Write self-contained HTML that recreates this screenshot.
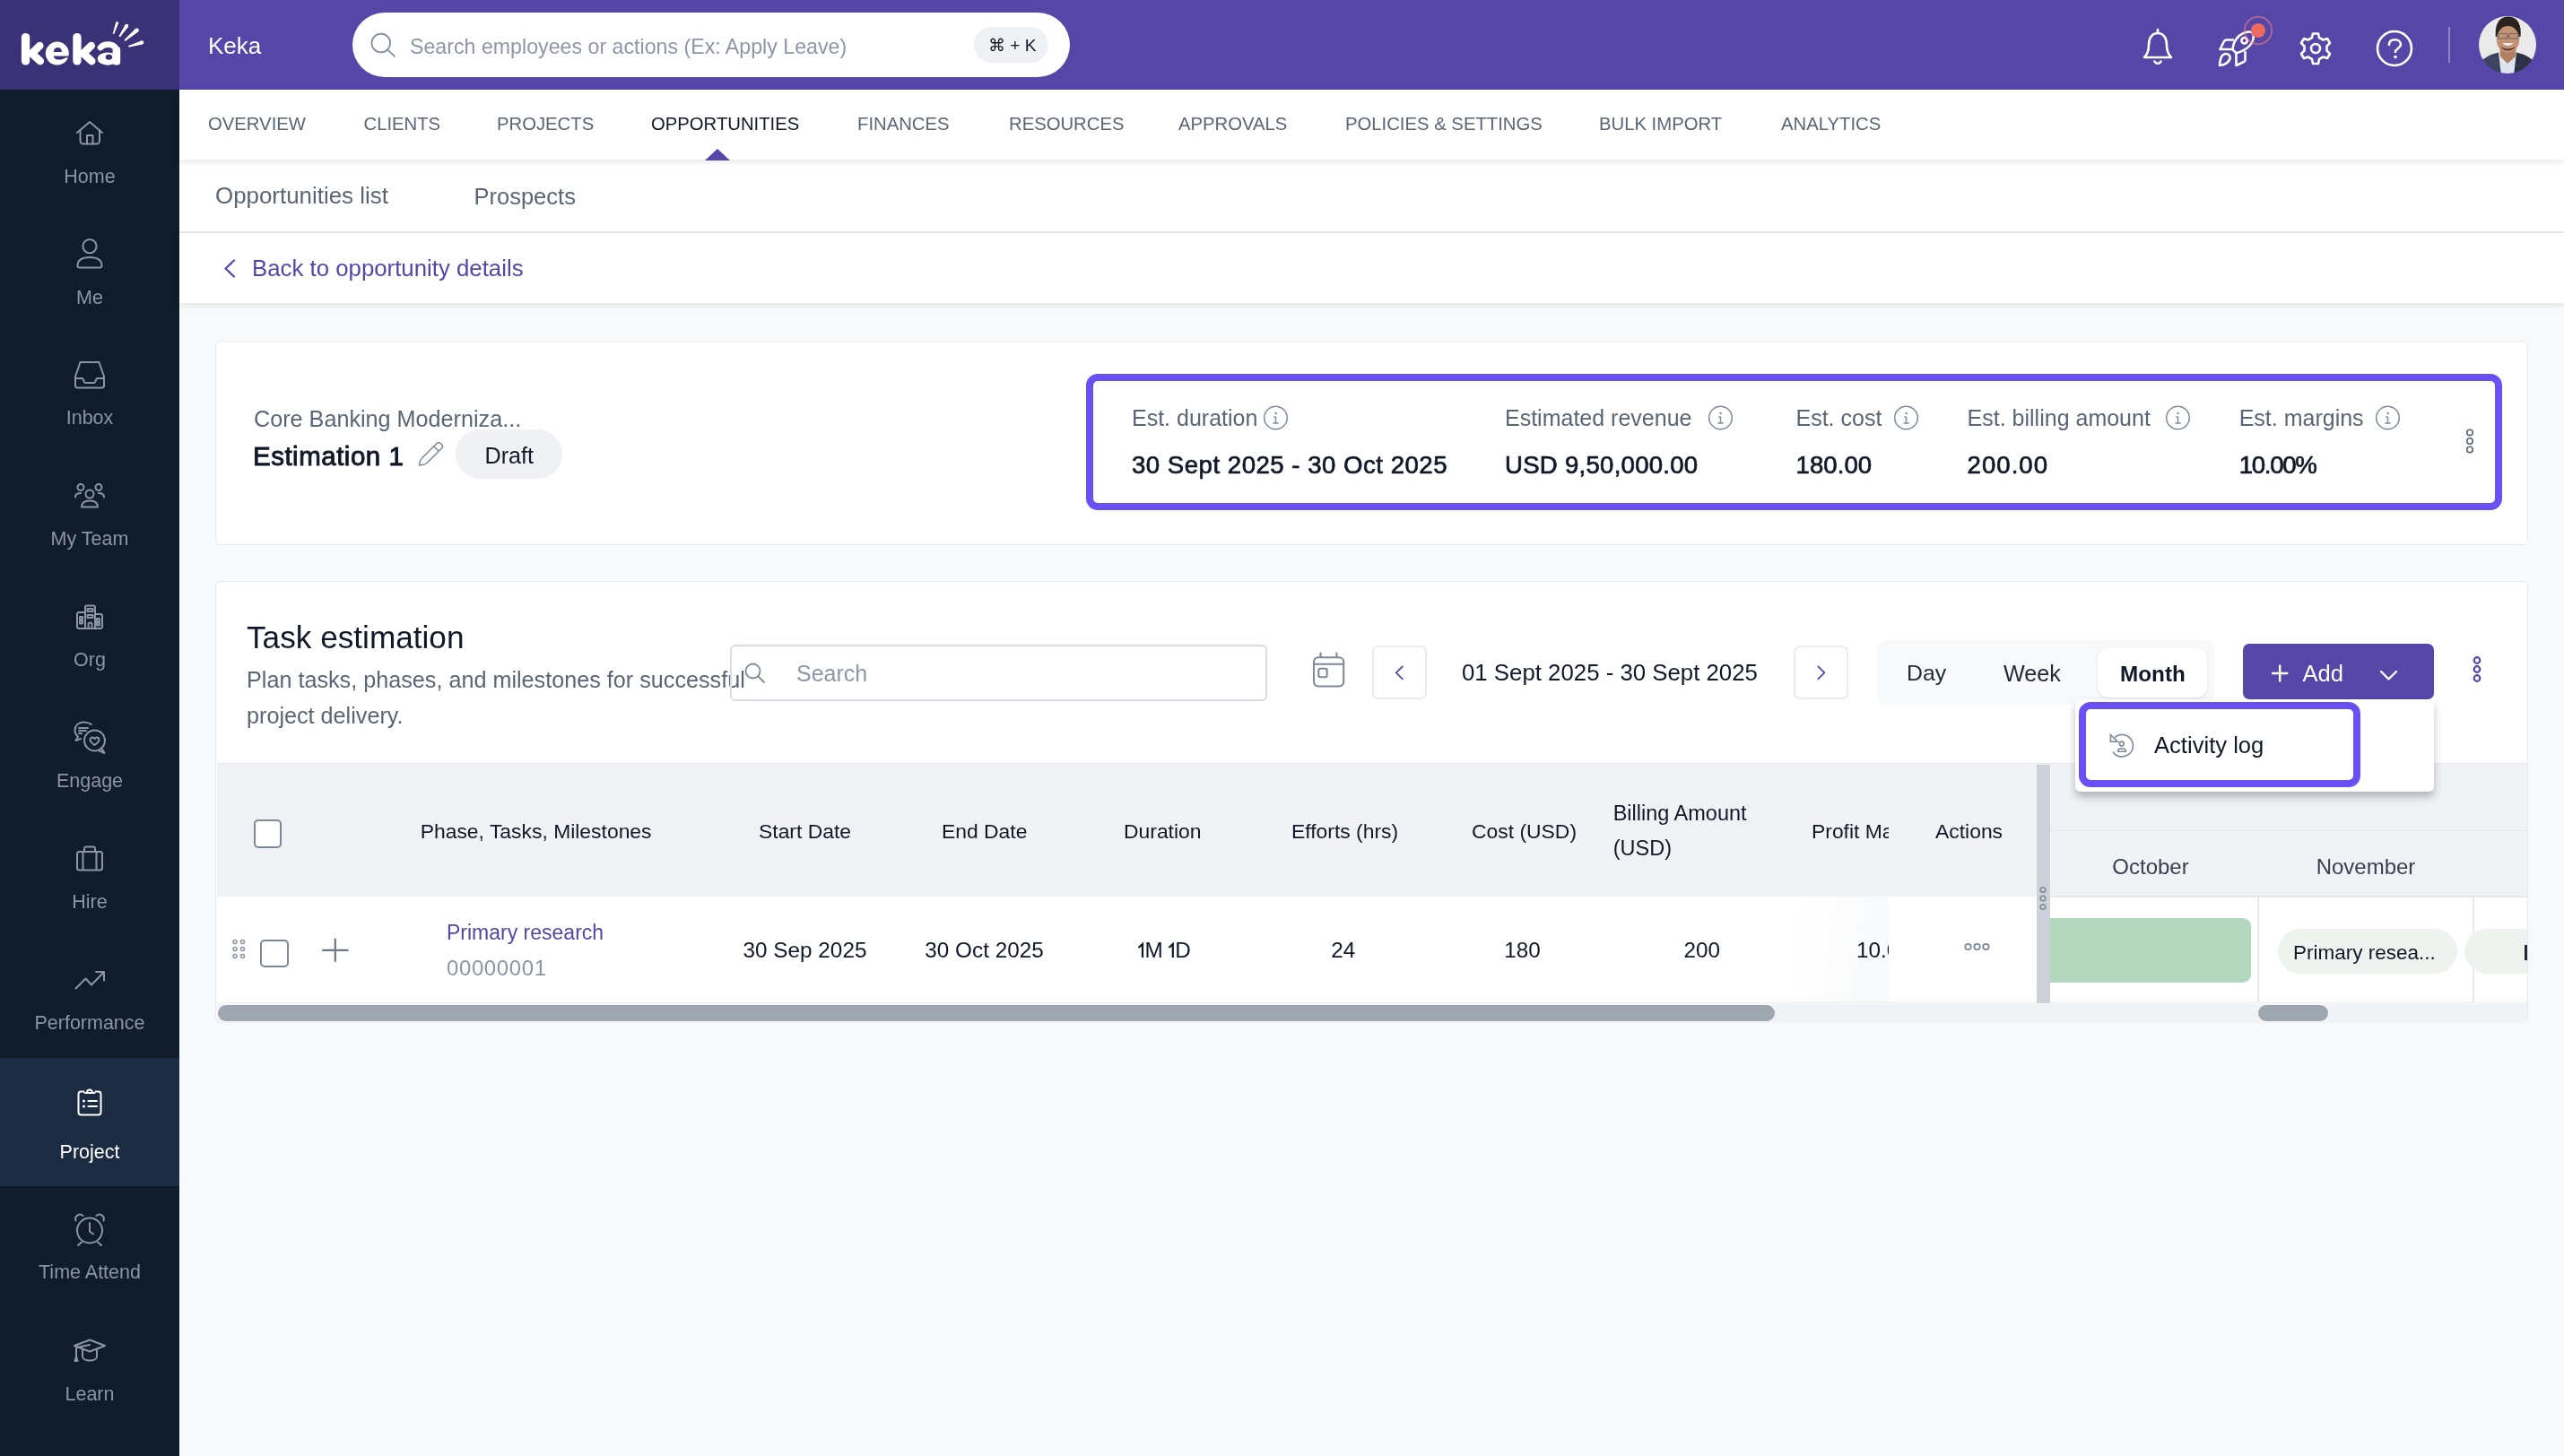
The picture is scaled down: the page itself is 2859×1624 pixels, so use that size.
<!DOCTYPE html>
<html><head><meta charset="utf-8"><title>Keka - Task estimation</title>
<style>
html,body{margin:0;padding:0;width:2859px;height:1624px;overflow:hidden;}
body{position:relative;font-family:"Liberation Sans", sans-serif;}
#root{position:absolute;left:0;top:0;width:2859px;height:1624px;will-change:transform;}
</style></head><body><div id="root">
<div style="position:absolute;left:0px;top:0px;width:2859px;height:1624px;background:#f8f9fa"></div>
<div style="position:absolute;left:200px;top:0px;width:2659px;height:100px;background:#5546a8"></div>
<div style="position:absolute;left:0px;top:0px;width:200px;height:100px;background:#3b3176"></div>
<div style="position:absolute;left:232px;top:37.90px;font-size:26px;line-height:1;color:#ffffff;font-weight:400;white-space:nowrap;">Keka</div>
<div style="position:absolute;left:393px;top:14px;width:800px;height:72px;background:#fff;border-radius:36px"></div>
<div style="position:absolute;left:457px;top:40.78px;font-size:23.2px;line-height:1;color:#8d97a5;font-weight:400;white-space:nowrap;">Search employees or actions (Ex: Apply Leave)</div>
<div style="position:absolute;left:1086px;top:30px;width:83px;height:40px;background:#f0f1f4;border-radius:20px"></div>
<div style="position:absolute;left:1102px;top:40.68px;font-size:19.2px;line-height:1;color:#111827;font-weight:400;white-space:nowrap;">&#8984; + K</div>
<div style="position:absolute;left:2730px;top:30px;width:2px;height:40px;background:rgba(255,255,255,0.35)"></div>
<div style="position:absolute;left:0px;top:100px;width:200px;height:1524px;background:#101c2a"></div>
<div style="position:absolute;left:0px;top:1180px;width:200px;height:143px;background:#1a2b42"></div>
<div style="position:absolute;left:100px;transform:translateX(-50%);top:186.62px;font-size:21.5px;line-height:1;color:#8b95a4;font-weight:400;white-space:nowrap;">Home</div>
<div style="position:absolute;left:100px;transform:translateX(-50%);top:321.62px;font-size:21.5px;line-height:1;color:#8b95a4;font-weight:400;white-space:nowrap;">Me</div>
<div style="position:absolute;left:100px;transform:translateX(-50%);top:455.62px;font-size:21.5px;line-height:1;color:#8b95a4;font-weight:400;white-space:nowrap;">Inbox</div>
<div style="position:absolute;left:100px;transform:translateX(-50%);top:590.62px;font-size:21.5px;line-height:1;color:#8b95a4;font-weight:400;white-space:nowrap;">My Team</div>
<div style="position:absolute;left:100px;transform:translateX(-50%);top:725.62px;font-size:21.5px;line-height:1;color:#8b95a4;font-weight:400;white-space:nowrap;">Org</div>
<div style="position:absolute;left:100px;transform:translateX(-50%);top:860.62px;font-size:21.5px;line-height:1;color:#8b95a4;font-weight:400;white-space:nowrap;">Engage</div>
<div style="position:absolute;left:100px;transform:translateX(-50%);top:995.62px;font-size:21.5px;line-height:1;color:#8b95a4;font-weight:400;white-space:nowrap;">Hire</div>
<div style="position:absolute;left:100px;transform:translateX(-50%);top:1130.62px;font-size:21.5px;line-height:1;color:#8b95a4;font-weight:400;white-space:nowrap;">Performance</div>
<div style="position:absolute;left:100px;transform:translateX(-50%);top:1274.62px;font-size:21.5px;line-height:1;color:#ffffff;font-weight:400;white-space:nowrap;">Project</div>
<div style="position:absolute;left:100px;transform:translateX(-50%);top:1408.62px;font-size:21.5px;line-height:1;color:#8b95a4;font-weight:400;white-space:nowrap;">Time Attend</div>
<div style="position:absolute;left:100px;transform:translateX(-50%);top:1544.62px;font-size:21.5px;line-height:1;color:#8b95a4;font-weight:400;white-space:nowrap;">Learn</div>
<div style="position:absolute;left:200px;top:100px;width:2659px;height:78px;background:#fff;z-index:2;box-shadow:0 3px 6px rgba(17,24,39,0.09)"></div>
<div style="position:absolute;left:232px;top:128.25px;font-size:20.3px;line-height:1;color:#5b6675;font-weight:400;white-space:nowrap;z-index:3">OVERVIEW</div>
<div style="position:absolute;left:405.5px;top:128.25px;font-size:20.3px;line-height:1;color:#5b6675;font-weight:400;white-space:nowrap;z-index:3">CLIENTS</div>
<div style="position:absolute;left:554px;top:128.25px;font-size:20.3px;line-height:1;color:#5b6675;font-weight:400;white-space:nowrap;z-index:3">PROJECTS</div>
<div style="position:absolute;left:726px;top:128.25px;font-size:20.3px;line-height:1;color:#111827;font-weight:400;white-space:nowrap;z-index:3">OPPORTUNITIES</div>
<div style="position:absolute;left:956px;top:128.25px;font-size:20.3px;line-height:1;color:#5b6675;font-weight:400;white-space:nowrap;z-index:3">FINANCES</div>
<div style="position:absolute;left:1125px;top:128.25px;font-size:20.3px;line-height:1;color:#5b6675;font-weight:400;white-space:nowrap;z-index:3">RESOURCES</div>
<div style="position:absolute;left:1314px;top:128.25px;font-size:20.3px;line-height:1;color:#5b6675;font-weight:400;white-space:nowrap;z-index:3">APPROVALS</div>
<div style="position:absolute;left:1500px;top:128.25px;font-size:20.3px;line-height:1;color:#5b6675;font-weight:400;white-space:nowrap;z-index:3">POLICIES &amp; SETTINGS</div>
<div style="position:absolute;left:1783px;top:128.25px;font-size:20.3px;line-height:1;color:#5b6675;font-weight:400;white-space:nowrap;z-index:3">BULK IMPORT</div>
<div style="position:absolute;left:1986px;top:128.25px;font-size:20.3px;line-height:1;color:#5b6675;font-weight:400;white-space:nowrap;z-index:3">ANALYTICS</div>
<svg style="position:absolute;left:785px;top:165px;z-index:3" width="30" height="14"><polygon points="1,14 15,1 29,14" fill="#5546a8"/></svg>
<div style="position:absolute;left:200px;top:178px;width:2659px;height:82px;background:#fff;border-bottom:2px solid #e5e7eb;box-sizing:border-box"></div>
<div style="position:absolute;left:240px;top:206.49px;font-size:25.9px;line-height:1;color:#5b6675;font-weight:400;white-space:nowrap;">Opportunities list</div>
<div style="position:absolute;left:528.5px;top:206.82px;font-size:25.5px;line-height:1;color:#5b6675;font-weight:400;white-space:nowrap;">Prospects</div>
<div style="position:absolute;left:200px;top:260px;width:2659px;height:78px;background:#fff;z-index:2;box-shadow:0 3px 6px rgba(17,24,39,0.09)"></div>
<div style="position:absolute;left:281px;top:286.57px;font-size:25.8px;line-height:1;color:#5546a8;font-weight:400;white-space:nowrap;z-index:3">Back to opportunity details</div>
<div style="position:absolute;left:240.3px;top:380px;width:2579px;height:228px;background:#fff;border:1.8px solid #e8e9ec;border-radius:6px;box-sizing:border-box"></div>
<div style="position:absolute;left:283px;top:454.58px;font-size:25.2px;line-height:1;color:#5b6675;font-weight:400;white-space:nowrap;">Core Banking Moderniza...</div>
<div style="position:absolute;left:282px;top:493.93px;font-size:29.5px;line-height:1;color:#111827;font-weight:400;white-space:nowrap;-webkit-text-stroke:0.9px #111827;letter-spacing:0.5px">Estimation 1</div>
<div style="position:absolute;left:508px;top:479px;width:119px;height:55px;background:#f0f1f4;border-radius:28px"></div>
<div style="position:absolute;left:540.5px;top:495.58px;font-size:25.2px;line-height:1;color:#111827;font-weight:400;white-space:nowrap;">Draft</div>
<div style="position:absolute;left:1211px;top:417px;width:1579px;height:152px;border:8px solid #6a50f2;border-radius:13px;box-sizing:border-box"></div>
<div style="position:absolute;left:1262px;top:454.35px;font-size:25px;line-height:1;color:#5b6675;font-weight:400;white-space:nowrap;">Est. duration</div>
<div style="position:absolute;left:1678px;top:454.35px;font-size:25px;line-height:1;color:#5b6675;font-weight:400;white-space:nowrap;">Estimated revenue</div>
<div style="position:absolute;left:2002.5px;top:454.35px;font-size:25px;line-height:1;color:#5b6675;font-weight:400;white-space:nowrap;">Est. cost</div>
<div style="position:absolute;left:2193.6px;top:454.35px;font-size:25px;line-height:1;color:#5b6675;font-weight:400;white-space:nowrap;">Est. billing amount</div>
<div style="position:absolute;left:2496.7px;top:454.35px;font-size:25px;line-height:1;color:#5b6675;font-weight:400;white-space:nowrap;">Est. margins</div>
<div style="position:absolute;left:1262px;top:505.04px;font-size:27.6px;line-height:1;color:#111827;font-weight:400;white-space:nowrap;-webkit-text-stroke:0.7px #111827;letter-spacing:0.5px">30 Sept 2025 - 30 Oct 2025</div>
<div style="position:absolute;left:1678px;top:505.04px;font-size:27.6px;line-height:1;color:#111827;font-weight:400;white-space:nowrap;-webkit-text-stroke:0.7px #111827;letter-spacing:0.25px">USD 9,50,000.00</div>
<div style="position:absolute;left:2002.5px;top:505.04px;font-size:27.6px;line-height:1;color:#111827;font-weight:400;white-space:nowrap;-webkit-text-stroke:0.7px #111827;letter-spacing:0.05px">180.00</div>
<div style="position:absolute;left:2193.6px;top:505.04px;font-size:27.6px;line-height:1;color:#111827;font-weight:400;white-space:nowrap;-webkit-text-stroke:0.7px #111827;letter-spacing:1.0px">200.00</div>
<div style="position:absolute;left:2496.7px;top:505.04px;font-size:27.6px;line-height:1;color:#111827;font-weight:400;white-space:nowrap;-webkit-text-stroke:0.7px #111827;letter-spacing:-1.3px">10.00%</div>
<div style="position:absolute;left:240.3px;top:648px;width:2579px;height:493px;background:#fff;border:1.8px solid #e8e9ec;border-radius:6px;box-sizing:border-box"></div>
<div style="position:absolute;left:275px;top:692.88px;font-size:35.2px;line-height:1;color:#111827;font-weight:400;white-space:nowrap;">Task estimation</div>
<div style="position:absolute;left:275px;top:745.58px;font-size:25.2px;line-height:1;color:#5b6675;font-weight:400;white-space:nowrap;">Plan tasks, phases, and milestones for successful</div>
<div style="position:absolute;left:275px;top:786.08px;font-size:25.2px;line-height:1;color:#5b6675;font-weight:400;white-space:nowrap;">project delivery.</div>
<div style="position:absolute;left:814px;top:719px;width:599px;height:63px;border:2px solid #d9dde3;border-radius:6px;box-sizing:border-box"></div>
<div style="position:absolute;left:888px;top:738.75px;font-size:25px;line-height:1;color:#8d97a5;font-weight:400;white-space:nowrap;">Search</div>
<div style="position:absolute;left:1529.5px;top:720px;width:61px;height:60px;border:2px solid #e9ebee;border-radius:7px;box-sizing:border-box"></div>
<div style="position:absolute;left:1630px;top:737.57px;font-size:25.8px;line-height:1;color:#111827;font-weight:400;white-space:nowrap;">01 Sept 2025 - 30 Sept 2025</div>
<div style="position:absolute;left:1999.5px;top:720px;width:61px;height:60px;border:2px solid #e9ebee;border-radius:7px;box-sizing:border-box"></div>
<div style="position:absolute;left:2093px;top:714px;width:376px;height:72px;background:#f8f9fb;border-radius:12px"></div>
<div style="position:absolute;left:2126px;top:739.42px;font-size:24.8px;line-height:1;color:#1f2937;font-weight:400;white-space:nowrap;">Day</div>
<div style="position:absolute;left:2234px;top:739.08px;font-size:25.2px;line-height:1;color:#1f2937;font-weight:400;white-space:nowrap;">Week</div>
<div style="position:absolute;left:2339px;top:722px;width:122px;height:56px;background:#fff;border-radius:12px;box-shadow:0 1px 3px rgba(17,24,39,0.13)"></div>
<div style="position:absolute;left:2364px;top:739.85px;font-size:24.3px;line-height:1;color:#111827;font-weight:700;white-space:nowrap;">Month</div>
<div style="position:absolute;left:2501px;top:718px;width:213px;height:62px;background:#5546a8;border-radius:7px"></div>
<div style="position:absolute;left:2567.5px;top:738.74px;font-size:25.6px;line-height:1;color:#fff;font-weight:400;white-space:nowrap;">Add</div>
<div style="position:absolute;left:242px;top:851px;width:2576px;height:149px;background:#f1f2f6;border-top:1.5px solid #e8eaee;box-sizing:border-box"></div>
<div style="position:absolute;left:282.5px;top:914px;width:31px;height:31.5px;background:#fff;border:2px solid #7d8795;border-radius:5px;box-sizing:border-box"></div>
<div style="position:absolute;left:468.7px;top:916.03px;font-size:22.9px;line-height:1;color:#111827;font-weight:400;white-space:nowrap;">Phase, Tasks, Milestones</div>
<div style="position:absolute;left:846px;top:916.03px;font-size:22.9px;line-height:1;color:#111827;font-weight:400;white-space:nowrap;">Start Date</div>
<div style="position:absolute;left:1050px;top:916.03px;font-size:22.9px;line-height:1;color:#111827;font-weight:400;white-space:nowrap;">End Date</div>
<div style="position:absolute;left:1253px;top:916.03px;font-size:22.9px;line-height:1;color:#111827;font-weight:400;white-space:nowrap;">Duration</div>
<div style="position:absolute;left:1440px;top:916.03px;font-size:22.9px;line-height:1;color:#111827;font-weight:400;white-space:nowrap;">Efforts (hrs)</div>
<div style="position:absolute;left:1641px;top:916.03px;font-size:22.9px;line-height:1;color:#111827;font-weight:400;white-space:nowrap;">Cost (USD)</div>
<div style="position:absolute;left:2158px;top:916.03px;font-size:22.9px;line-height:1;color:#111827;font-weight:400;white-space:nowrap;">Actions</div>
<div style="position:absolute;left:1798.7px;top:895.52px;font-size:23.5px;line-height:1;color:#111827;font-weight:400;white-space:nowrap;">Billing Amount</div>
<div style="position:absolute;left:1798.7px;top:935.02px;font-size:23.5px;line-height:1;color:#111827;font-weight:400;white-space:nowrap;">(USD)</div>
<div style="position:absolute;left:2000px;top:851px;width:106px;height:149px;overflow:hidden"><div style="position:absolute;left:20px;top:65.03px;font-size:22.9px;line-height:1;color:#111827;white-space:nowrap">Profit Margin</div></div>
<div style="position:absolute;left:242px;top:1000px;width:2576px;height:119px;background:#fff;border-bottom:1.5px solid #e6e8ec;box-sizing:border-box"></div>
<div style="position:absolute;left:290px;top:1047.5px;width:31.5px;height:31.5px;background:#fff;border:2px solid #7d8795;border-radius:5px;box-sizing:border-box"></div>
<div style="position:absolute;left:498px;top:1028.95px;font-size:23px;line-height:1;color:#5546a8;font-weight:400;white-space:nowrap;">Primary research</div>
<div style="position:absolute;left:498px;top:1068.10px;font-size:24px;line-height:1;color:#8b95a4;font-weight:400;white-space:nowrap;letter-spacing:0.6px">00000001</div>
<div style="position:absolute;left:897.5px;transform:translateX(-50%);top:1048.05px;font-size:24.3px;line-height:1;color:#111827;font-weight:400;white-space:nowrap;">30 Sep 2025</div>
<div style="position:absolute;left:1097.5px;transform:translateX(-50%);top:1048.05px;font-size:24.3px;line-height:1;color:#111827;font-weight:400;white-space:nowrap;">30 Oct 2025</div>
<div style="position:absolute;left:1497.7px;transform:translateX(-50%);top:1048.05px;font-size:24.3px;line-height:1;color:#111827;font-weight:400;white-space:nowrap;">24</div>
<div style="position:absolute;left:1697.5px;transform:translateX(-50%);top:1048.05px;font-size:24.3px;line-height:1;color:#111827;font-weight:400;white-space:nowrap;">180</div>
<div style="position:absolute;left:1897.7px;transform:translateX(-50%);top:1048.05px;font-size:24.3px;line-height:1;color:#111827;font-weight:400;white-space:nowrap;">200</div>
<div style="position:absolute;left:1276.5px;top:1048.05px;font-size:24.3px;line-height:1;color:#111827;font-weight:400;white-space:nowrap;">M</div>
<div style="position:absolute;left:1310.3px;top:1048.05px;font-size:24.3px;line-height:1;color:#111827;font-weight:400;white-space:nowrap;">D</div>
<div style="position:absolute;left:2000px;top:1000px;width:106px;height:118px;overflow:hidden;background:linear-gradient(100deg,rgba(255,255,255,0) 0%,rgba(240,242,245,0.5) 100%)"><div style="position:absolute;left:70px;top:48.05px;font-size:24.3px;line-height:1;color:#111827;white-space:nowrap">10.00%</div></div>
<div style="position:absolute;left:2271px;top:853px;width:14.5px;height:266px;background:#cdd2da"></div>
<div style="position:absolute;left:2286px;top:853px;width:532px;height:147px;background:#f1f2f6"></div>
<div style="position:absolute;left:2286px;top:925.5px;width:532px;height:1.5px;background:#e4e7eb"></div>
<div style="position:absolute;left:2286px;top:999px;width:532px;height:1.5px;background:#e4e7eb"></div>
<div style="position:absolute;left:2398px;transform:translateX(-50%);top:955.10px;font-size:24px;line-height:1;color:#374151;font-weight:400;white-space:nowrap;">October</div>
<div style="position:absolute;left:2638px;transform:translateX(-50%);top:955.10px;font-size:24px;line-height:1;color:#374151;font-weight:400;white-space:nowrap;">November</div>
<div style="position:absolute;left:2517px;top:1000px;width:2px;height:119px;background:#e8e9ee"></div>
<div style="position:absolute;left:2757px;top:1000px;width:2px;height:119px;background:#e8e9ee"></div>
<div style="position:absolute;left:2286px;top:1024px;width:224px;height:72px;background:#b3d8bd;border-radius:0 9px 9px 0"></div>
<div style="position:absolute;left:2540px;top:1036px;width:200px;height:50px;background:#eef3ef;border-radius:25px"></div>
<div style="position:absolute;left:2557px;top:1051.88px;font-size:22.5px;line-height:1;color:#111827;font-weight:400;white-space:nowrap;">Primary resea...</div>
<div style="position:absolute;left:2748px;top:1036px;width:70px;height:50px;overflow:hidden"><div style="position:absolute;left:0;top:0;width:200px;height:50px;background:#eef3ef;border-radius:25px"></div><div style="position:absolute;left:67px;top:18px;width:2.5px;height:16.5px;background:#1f2937"></div></div>
<div style="position:absolute;left:242px;top:1119.5px;width:2576px;height:21px;background:#f2f3f7;border-radius:0 0 5px 5px"></div>
<div style="position:absolute;left:243px;top:1121px;width:1736px;height:18px;background:#9ea6b0;border-radius:9px"></div>
<div style="position:absolute;left:2518px;top:1121px;width:78px;height:18px;background:#9ea6b0;border-radius:9px"></div>
<div style="position:absolute;left:2314px;top:780px;width:400px;height:103px;background:#fff;border-radius:6px;box-shadow:0 6px 10px rgba(17,24,39,0.28);z-index:5"></div>
<div style="position:absolute;left:2317.5px;top:783px;width:314px;height:95px;border:8px solid #6a50f2;border-radius:13px;box-sizing:border-box;z-index:6"></div>
<div style="position:absolute;left:2402px;top:819.44px;font-size:25.6px;line-height:1;color:#111827;font-weight:400;white-space:nowrap;z-index:6">Activity log</div>
<svg style="position:absolute;left:0;top:0;z-index:10;pointer-events:none" width="2859" height="1624" viewBox="0 0 2859 1624"><g stroke="#8b95a4" stroke-width="2" fill="none" stroke-linecap="round" stroke-linejoin="round"><path d="M86 148 L100 136 L114 148"/><path d="M89.5 145 V157 a3.5 3.5 0 0 0 3.5 3.5 H107.5 a3.5 3.5 0 0 0 3.5 -3.5 V145"/><path d="M97 160.5 V151 H103.5 V160.5"/><circle cx="100" cy="274.6" r="7.6"/><path d="M86.5 296.5 C86.5 290 92 287 100 287 C108 287 113.5 290 113.5 296.5 C113.5 298 112.5 298.5 111 298.5 H89 C87.5 298.5 86.5 298 86.5 296.5 Z"/><path d="M89.5 404 H110.5 L116 420 V430 a2.5 2.5 0 0 1 -2.5 2.5 H86.5 a2.5 2.5 0 0 1 -2.5 -2.5 V420 Z"/><path d="M84 422 H92 L94 426 a2 2 0 0 0 1.8 1 H104.2 a2 2 0 0 0 1.8 -1 L108 422 H116"/><circle cx="90" cy="543.5" r="3.5"/><circle cx="110" cy="543.5" r="3.5"/><circle cx="100" cy="551" r="4.5"/><path d="M84 554.5 C84 551 86.5 550 90 550"/><path d="M116 554.5 C116 551 113.5 550 110 550"/><path d="M91 565.5 C91 560 95 558.5 100 558.5 C105 558.5 109 560 109 565.5 Z"/><path d="M97 675.5 H104 a2 2 0 0 1 2 2 V701 H95 V677.5 a2 2 0 0 1 2 -2 Z"/><path d="M95 683 H88 a2 2 0 0 0 -2 2 V699 a2 2 0 0 0 2 2 H112 a2 2 0 0 0 2 -2 V687 a2 2 0 0 0 -2 -2 H106"/><rect x="97.5" y="679" width="6" height="3"/><rect x="97.5" y="686" width="6" height="3"/><rect x="89" y="688" width="3" height="3"/><rect x="89" y="692.5" width="3" height="3"/><rect x="108" y="690" width="3" height="3"/><rect x="108" y="694.5" width="3" height="3"/><path d="M98.5 701 V696.5 a2 2 0 0 1 4 0 V701"/><path d="M102 808 C99 806 96 805.5 93 805.5 C87.5 805.5 83.5 809.5 83.5 814.5 C83.5 817.5 85 820 87 821.5 L84.5 826 L90 824"/><path d="M88 812 H98 M88 815 H96 M88 818 H91"/><circle cx="105.5" cy="826" r="11.5"/><path d="M113 834 L116.5 840 L110 837"/><path d="M105.5 831 C101 828 100.5 826.5 100.5 825 C100.5 823.5 101.5 822.5 103 822.5 C104.2 822.5 105 823.2 105.5 824.2 C106 823.2 106.8 822.5 108 822.5 C109.5 822.5 110.5 823.5 110.5 825 C110.5 826.5 110 828 105.5 831 Z"/><rect x="86" y="950" width="28" height="20.5" rx="2.5"/><path d="M94 950 V946.5 a2 2 0 0 1 2 -2 H104 a2 2 0 0 1 2 2 V950"/><path d="M92.5 950.5 V970 M107.5 950.5 V970"/><path d="M84.5 1102.5 L95.5 1091.5 L102 1098.5 L116 1084 M107 1084 H116 V1093.5"/><circle cx="100" cy="1372.5" r="14"/><path d="M100 1364 V1373.5 L104 1376.5"/><path d="M84.5 1361.5 a5 5 0 0 1 8 -5.5"/><path d="M115.5 1361.5 a5 5 0 0 0 -8 -5.5"/><path d="M91 1385.5 L87 1389 M109 1385.5 L113 1389"/><path d="M100 1494.5 L117 1501 L100 1507.5 L83 1501 Z"/><path d="M92 1504.5 V1513 C92 1516 96 1517.5 100 1517.5 C104 1517.5 108 1516 108 1513 V1504.5"/><path d="M100 1500 L85 1503 V1514"/><path d="M85 1513 L83.5 1518 H86.5 Z"/></g><g stroke="#ffffff" stroke-width="2" fill="none" stroke-linecap="round" stroke-linejoin="round"><path d="M93.5 1217.5 H90.5 a3 3 0 0 0 -3 3 V1240.5 a3 3 0 0 0 3 3 H109.5 a3 3 0 0 0 3 -3 V1220.5 a3 3 0 0 0 -3 -3 H106.5"/><path d="M94.5 1219 H105.5"/><path d="M97 1218.5 a3 3 0 0 1 6 0"/><path d="M98.5 1228 H108 M98.5 1234 H108"/><circle cx="93.5" cy="1228" r="0.6" fill="#fff"/><circle cx="93.5" cy="1234" r="0.6" fill="#fff"/></g><g fill="#ffffff" stroke="none"><rect x="23.9" y="36.9" width="9.3" height="35.6" rx="4.6"/><rect x="81.3" y="36.9" width="9.3" height="35.6" rx="4.6"/></g><g fill="none" stroke="#ffffff" stroke-linecap="round" stroke-linejoin="round" stroke-width="8.6"><path d="M44.3 51 L35.5 59.6 L44.8 68.2"/><path d="M101.7 51 L92.9 59.6 L102.2 68.2"/></g><circle cx="63.8" cy="59.6" r="13" fill="#ffffff"/><path d="M59.8 57.9 C59.8 55 61.8 53.1 64.4 53.1 C67 53.1 69 55 69 57.9 Z" fill="#3b3176"/><path d="M59.8 62.4 H78 V64.2 L73.5 64.2 C71.5 66 68 66.6 64.6 66.5 C61.8 66.3 59.8 64.8 59.8 62.4 Z" fill="#3b3176"/><g fill="#ffffff"><rect x="125.6" y="52" width="8.6" height="20.6" rx="3.5"/><ellipse cx="120.2" cy="65.6" rx="11.4" ry="7.1"/></g><path d="M112 53 C114.5 50.3 117.5 49.6 120.5 49.6 C126.5 49.6 130 52.5 130 58" fill="none" stroke="#ffffff" stroke-width="6.6" stroke-linecap="round"/><ellipse cx="121.4" cy="63.8" rx="3.7" ry="3" fill="#3b3176"/><g fill="#ffffff"><polygon points="127.36,37.46 132.02,26.09 129.18,25.11 125.84,36.94"/><circle cx="130.6" cy="25.6" r="1.5"/><circle cx="126.6" cy="37.2" r="0.8"/><polygon points="134.35,40.70 142.86,29.91 139.54,27.69 132.85,39.70"/><circle cx="141.2" cy="28.8" r="2.0"/><circle cx="133.6" cy="40.2" r="0.9"/><polygon points="140.25,45.56 154.09,35.56 151.11,32.04 138.95,44.04"/><circle cx="152.6" cy="33.8" r="2.3"/><circle cx="139.6" cy="44.8" r="1.0"/><polygon points="144.49,52.56 158.80,49.41 157.60,45.39 143.91,50.64"/><circle cx="158.2" cy="47.4" r="2.1"/><circle cx="144.2" cy="51.6" r="1.0"/></g><g stroke="#7f8a99" stroke-width="1.7" fill="none" stroke-linecap="round" stroke-linejoin="round"><circle cx="424.8" cy="48" r="10.3"/><path d="M432.3 55.6 L440 62.8"/></g><g stroke="#ffffff" stroke-width="2.6" fill="none" stroke-linecap="round" stroke-linejoin="round"><path d="M2406 33 V36"/><path d="M2391 64 C2394 61 2396 57 2396 50 C2396 42 2400 37 2406 37 C2412 37 2416 42 2416 50 C2416 57 2418 61 2421 64 Z"/><path d="M2402.5 68.5 C2404 71.5 2408 71.5 2409.5 68.5"/><path d="M2489.5 55.5 C2490 45.5 2497 36.5 2507 35.5 C2511.5 35 2513 37 2512.8 41 C2512.5 48.5 2506 55.5 2493.5 59.3 C2492 57.5 2491 56.5 2489.5 55.5 Z"/><circle cx="2502.6" cy="45.2" r="3.2"/><path d="M2490 44.5 H2483 C2481.5 44.5 2480.5 45 2480 46 L2475.5 55 H2487.5"/><path d="M2503.5 58 V67 C2503.5 68 2503 68.5 2502 69 L2493.5 73 V61"/><path d="M2475 73 C2475.5 64 2478 60 2482 60 C2485 60 2487 62 2486.5 65 C2486 69 2481 72.5 2475 73 Z"/><path d="M2579 37.5 H2585 L2586 42 L2590.5 44.5 L2595 43 L2598 48 L2594.5 51.5 V56.5 L2598 60 L2595 65 L2590.5 63.5 L2586 66 L2585 71 H2579 L2578 66 L2573.5 63.5 L2569 65 L2566 60 L2569.5 56.5 V51.5 L2566 48 L2569 43 L2573.5 44.5 L2578 42 Z"/><circle cx="2582" cy="54" r="5"/><circle cx="2670" cy="54" r="19"/><path d="M2664 50 C2664 46.5 2666.5 44.3 2670.5 44.3 C2674.5 44.3 2677 46.8 2677 49.8 C2677 53.8 2671 54.2 2671 58"/></g><circle cx="2671" cy="63.5" r="1.8" fill="#fff"/><circle cx="2518" cy="34" r="15.2" fill="none" stroke="rgba(240,130,130,0.55)" stroke-width="2"/><circle cx="2518" cy="34" r="8" fill="#ec6a5e"/><defs><clipPath id="av"><circle cx="2796" cy="50" r="32"/></clipPath><filter id="avblur" x="-10%" y="-10%" width="120%" height="120%"><feGaussianBlur stdDeviation="0.7"/></filter></defs><g clip-path="url(#av)"><g filter="url(#avblur)"><rect x="2764" y="18" width="64" height="64" fill="#ebeaea"/><path d="M2785 58 L2808 58 L2807 84 L2786 84 Z" fill="#dfe5ee"/><path d="M2764 72 C2770 63 2779 60 2786 58.5 L2789 84 L2764 84 Z" fill="#3a4560"/><path d="M2828 72 C2822 63 2813 60 2806 58.5 L2803 84 L2828 84 Z" fill="#2d3346"/><path d="M2787.5 54 L2805.5 54 L2805 63 L2796 71 L2788 63 Z" fill="#b07f64"/><path d="M2782.8 41 C2781.5 24 2789 18.5 2797 18.5 C2805 18.5 2812 24 2810.5 41 Z" fill="#2a201c"/><ellipse cx="2796.5" cy="44" rx="12.8" ry="15" fill="#c39173"/><rect x="2785.5" y="37.5" width="10.5" height="5.5" rx="2" fill="none" stroke="#6d6762" stroke-width="1.1"/><rect x="2797.5" y="37.5" width="10.5" height="5.5" rx="2" fill="none" stroke="#6d6762" stroke-width="1.1"/><path d="M2788 51 C2790 58 2803 58 2805 51 C2803 55.5 2790 55.5 2788 51 Z" fill="#4d3428"/><path d="M2790.5 48 C2793 52 2800 52 2802.5 48 Z" fill="#efe6e8"/></g></g><circle cx="1422.5" cy="466" r="12.8" fill="none" stroke="#7f8a99" stroke-width="1.5"/><path d="M1422.5 465 V472 M1419.5 472 H1425.7 M1420.3 465 H1422.5" fill="none" stroke="#7f8a99" stroke-width="1.5"/><circle cx="1422.6" cy="461" r="1.2" fill="#7f8a99"/><circle cx="1918.5" cy="466" r="12.8" fill="none" stroke="#7f8a99" stroke-width="1.5"/><path d="M1918.5 465 V472 M1915.5 472 H1921.7 M1916.3 465 H1918.5" fill="none" stroke="#7f8a99" stroke-width="1.5"/><circle cx="1918.6" cy="461" r="1.2" fill="#7f8a99"/><circle cx="2125.5" cy="466" r="12.8" fill="none" stroke="#7f8a99" stroke-width="1.5"/><path d="M2125.5 465 V472 M2122.5 472 H2128.7 M2123.3 465 H2125.5" fill="none" stroke="#7f8a99" stroke-width="1.5"/><circle cx="2125.6" cy="461" r="1.2" fill="#7f8a99"/><circle cx="2428.5" cy="466" r="12.8" fill="none" stroke="#7f8a99" stroke-width="1.5"/><path d="M2428.5 465 V472 M2425.5 472 H2431.7 M2426.3 465 H2428.5" fill="none" stroke="#7f8a99" stroke-width="1.5"/><circle cx="2428.6" cy="461" r="1.2" fill="#7f8a99"/><circle cx="2662.5" cy="466" r="12.8" fill="none" stroke="#7f8a99" stroke-width="1.5"/><path d="M2662.5 465 V472 M2659.5 472 H2665.7 M2660.3 465 H2662.5" fill="none" stroke="#7f8a99" stroke-width="1.5"/><circle cx="2662.6" cy="461" r="1.2" fill="#7f8a99"/><g stroke="#7f8a99" stroke-width="1.5" fill="none" stroke-linecap="round" stroke-linejoin="round"><path d="M467.5 519 C468 515 469 512.5 471 510.5 L487 494.5 C488.2 493.3 490 493.3 491.2 494.5 L492.5 495.8 C493.7 497 493.7 498.8 492.5 500 L476.5 516 C474.5 518 471.5 518.5 467.5 519 Z"/><path d="M484 498 L489 503"/></g><g stroke="#5b6675" stroke-width="1.6" fill="none"><circle cx="2754" cy="482.5" r="3.2"/><circle cx="2754" cy="492" r="3.2"/><circle cx="2754" cy="501.5" r="3.2"/></g><g stroke="#7f8a99" stroke-width="1.8" fill="none" stroke-linecap="round" stroke-linejoin="round"><circle cx="839.5" cy="748.5" r="8"/><path d="M845.5 754.5 L852 761"/></g><g stroke="#7f8a99" stroke-width="2.1" fill="none" stroke-linecap="round" stroke-linejoin="round"><rect x="1465" y="733.3" width="33.2" height="32.2" rx="5"/><path d="M1465 740.7 H1498.2"/><path d="M1472.5 728.5 V732.5 M1490.5 728.5 V732.5"/><rect x="1470.3" y="745.8" width="9.4" height="9.5" rx="2"/></g><path d="M261 290.5 L251.5 299.5 L261 308.5" fill="none" stroke="#5546a8" stroke-width="2.2" stroke-linecap="round" stroke-linejoin="round"/><g stroke="#5546a8" stroke-width="1.8" fill="none" stroke-linecap="round" stroke-linejoin="round"><path d="M1563.8 743.4 L1556.8 750.4 L1563.8 757.4"/><path d="M2027.3 743.4 L2034.3 750.4 L2027.3 757.4"/></g><g stroke="#ffffff" stroke-width="2.4" fill="none" stroke-linecap="round" stroke-linejoin="round"><path d="M2542.2 742.5 V759.5 M2534 751 H2550.3"/><path d="M2655 749 L2663.5 757.5 L2672 749"/></g><g stroke="#5546a8" stroke-width="2.2" fill="none"><circle cx="2762" cy="736.5" r="3.3"/><circle cx="2762" cy="746.5" r="3.3"/><circle cx="2762" cy="756.5" r="3.3"/></g><g stroke="#7f8a99" stroke-width="1.6" fill="none" stroke-linecap="round" stroke-linejoin="round"><path d="M2358.6 822 A12.3 12.3 0 1 1 2356.4 839.2"/><path d="M2353.4 819.6 L2353.4 827.2 L2361.2 827.2 Z" stroke-linejoin="miter"/><circle cx="2365.8" cy="829.6" r="2.5"/><path d="M2361.6 838.2 C2361.6 835.6 2363.6 834.8 2366 834.8 C2368.4 834.8 2370.4 835.6 2370.4 838.2 Z"/></g><circle cx="262" cy="1050.5" r="2" fill="none" stroke="#8b95a4" stroke-width="1.5"/><circle cx="262" cy="1058.5" r="2" fill="none" stroke="#8b95a4" stroke-width="1.5"/><circle cx="262" cy="1066.5" r="2" fill="none" stroke="#8b95a4" stroke-width="1.5"/><circle cx="270.5" cy="1050.5" r="2" fill="none" stroke="#8b95a4" stroke-width="1.5"/><circle cx="270.5" cy="1058.5" r="2" fill="none" stroke="#8b95a4" stroke-width="1.5"/><circle cx="270.5" cy="1066.5" r="2" fill="none" stroke="#8b95a4" stroke-width="1.5"/><g stroke="#111827" stroke-width="2.2" fill="none" stroke-linejoin="miter"><path d="M1269.6 1057 L1274 1053 V1068"/><path d="M1303.4 1057 L1307.8 1053 V1068"/></g><g stroke="#6b7684" stroke-width="2.2" fill="none" stroke-linecap="round" stroke-linejoin="round"><path d="M373.8 1047.5 V1072 M360 1059.8 H387.6"/></g><circle cx="2194.5" cy="1056" r="3.2" fill="none" stroke="#7f8a99" stroke-width="1.8"/><circle cx="2204.5" cy="1056" r="3.2" fill="none" stroke="#7f8a99" stroke-width="1.8"/><circle cx="2214.5" cy="1056" r="3.2" fill="none" stroke="#7f8a99" stroke-width="1.8"/><circle cx="2278" cy="992.5" r="2.8" fill="none" stroke="#7f8a99" stroke-width="1.6"/><circle cx="2278" cy="1002" r="2.8" fill="none" stroke="#7f8a99" stroke-width="1.6"/><circle cx="2278" cy="1011.5" r="2.8" fill="none" stroke="#7f8a99" stroke-width="1.6"/></svg>
</div></body></html>
